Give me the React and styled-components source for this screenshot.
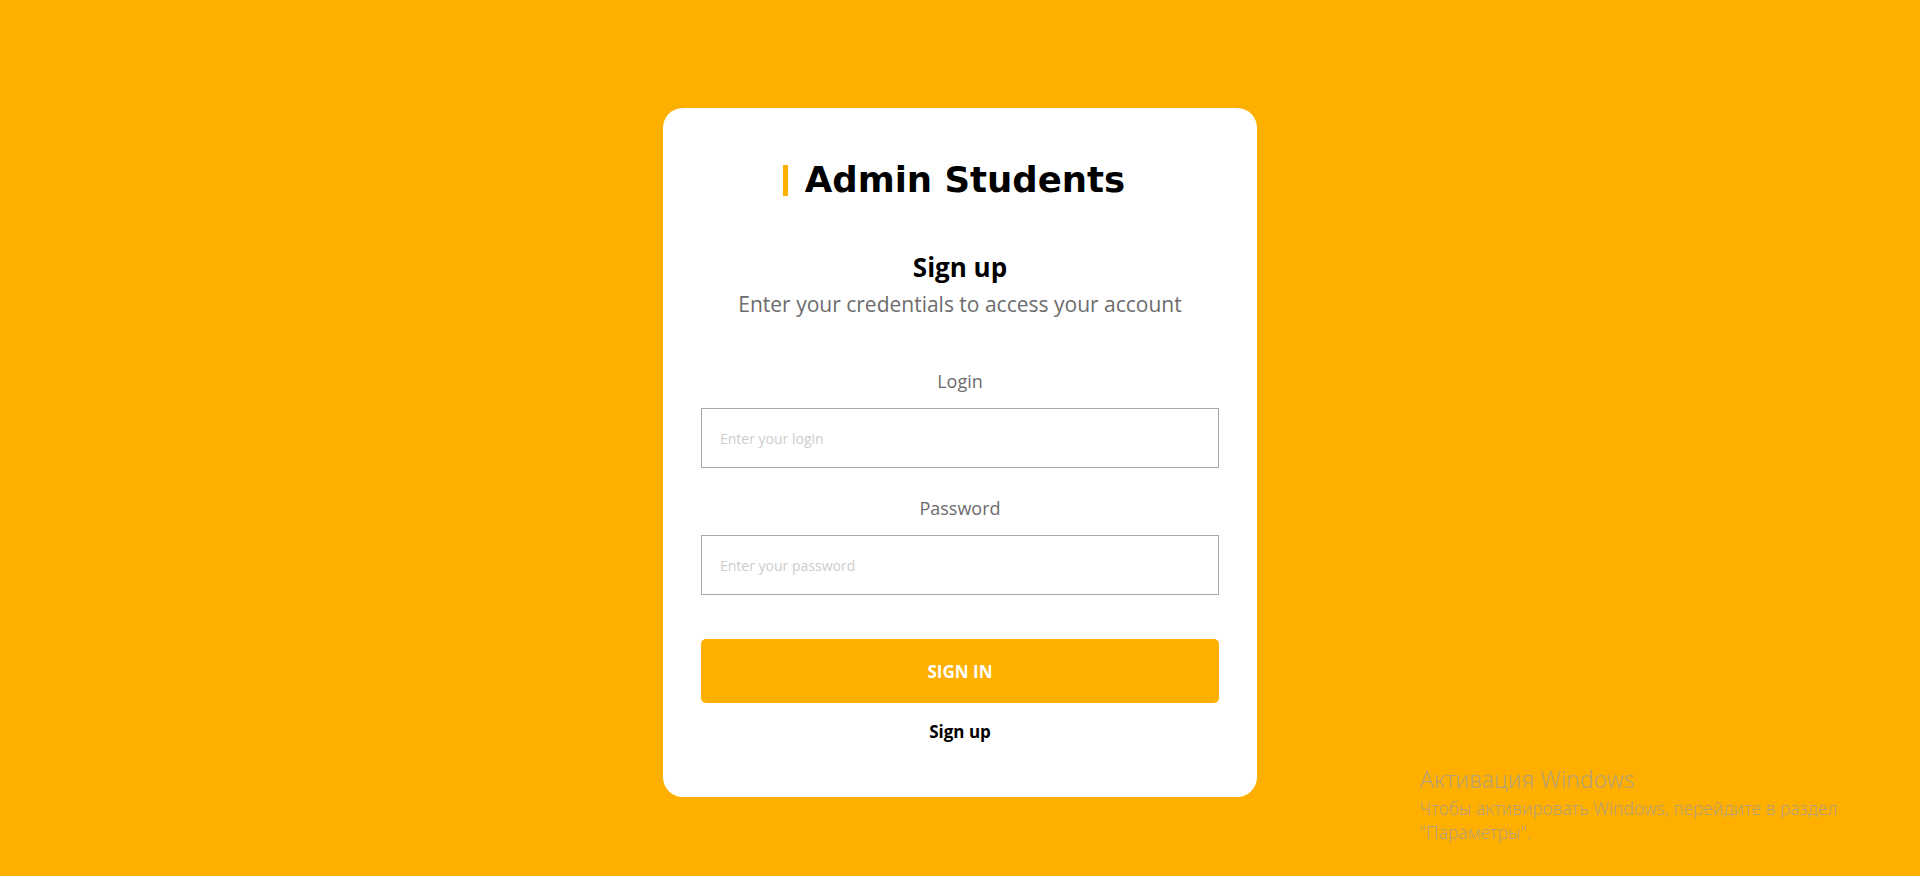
import React from "react";
import styled, { createGlobalStyle } from "styled-components";

const GlobalStyle = createGlobalStyle`
  * {
    box-sizing: border-box;
  }
  body {
    margin: 0;
    background: #feaf00;
    font-family: "Open Sans", "Noto Sans", sans-serif;
  }
`;

const Page = styled.div`
  min-height: 100vh;
  display: flex;
  justify-content: center;
  align-items: flex-start;
  padding-top: 108px;
`;

const Card = styled.div`
  width: 594px;
  background: #fff;
  border-radius: 20px;
  padding: 50px 38px 53px;
  display: flex;
  flex-direction: column;
  align-items: center;
`;

const Brand = styled.div`
  display: flex;
  align-items: center;
  gap: 17px;
  height: 44px;
  padding-right: 12px;
`;

const BrandBar = styled.span`
  width: 5px;
  height: 31px;
  background: #feaf00;
`;

const BrandName = styled.h1`
  margin: 0;
  font-family: "DejaVu Sans", "Open Sans", sans-serif;
  font-weight: 700;
  font-size: 35.5px;
  line-height: 44px;
  color: #000;
`;

const Heading = styled.h2`
  margin: 50px 0 0;
  font-size: 26px;
  line-height: 30px;
  font-weight: 700;
  color: #000;
`;

const Subtitle = styled.p`
  margin: 9px 0 0;
  font-size: 21px;
  line-height: 26px;
  color: #6c6c6c;
`;

const Form = styled.form`
  width: 100%;
  display: flex;
  flex-direction: column;
  align-items: center;
  margin-top: 52px;
`;

const Label = styled.label`
  font-size: 18px;
  line-height: 24px;
  color: #6c6c6c;
  margin-top: ${(p) => (p.$first ? "0" : "28px")};
  margin-bottom: 15px;
`;

const Input = styled.input`
  width: 100%;
  height: 60px;
  border: 1px solid #a9a9a9;
  border-radius: 0;
  padding: 0 18px;
  font-family: "Open Sans", "Noto Sans", sans-serif;
  font-size: 14px;
  outline: none;
  &::placeholder {
    color: #cdcdcd;
  }
`;

const Button = styled.button`
  width: 100%;
  height: 64px;
  margin-top: 44px;
  border: none;
  border-radius: 5px;
  background: #feaf00;
  color: #fff;
  font-family: "Open Sans", "Noto Sans", sans-serif;
  font-weight: 700;
  font-size: 17px;
  text-transform: uppercase;
  cursor: pointer;
`;

const SignUpLink = styled.a`
  margin-top: 17px;
  font-size: 17px;
  line-height: 24px;
  font-weight: 700;
  color: #000;
  text-decoration: none;
  cursor: pointer;
`;

const Watermark = styled.div`
  position: fixed;
  left: 1420px;
  top: 762px;
  color: #b3a075;
  font-family: "Noto Sans", sans-serif;
  pointer-events: none;
  h3 {
    margin: 0;
    font-size: 23px;
    font-weight: 300;
    line-height: 34px;
  }
  p {
    margin: 0;
    font-size: 17.5px;
    font-weight: 300;
    line-height: 24px;
  }
`;

export default function App() {
  return (
    <>
      <GlobalStyle />
      <Page>
        <Card>
          <Brand>
            <BrandBar />
            <BrandName>Admin Students</BrandName>
          </Brand>
          <Heading>Sign up</Heading>
          <Subtitle>Enter your credentials to access your account</Subtitle>
          <Form onSubmit={(e) => e.preventDefault()}>
            <Label $first htmlFor="login">Login</Label>
            <Input id="login" placeholder="Enter your login" />
            <Label htmlFor="password">Password</Label>
            <Input id="password" type="password" placeholder="Enter your password" />
            <Button type="submit">Sign in</Button>
            <SignUpLink>Sign up</SignUpLink>
          </Form>
        </Card>
      </Page>
      <Watermark>
        <h3>Активация Windows</h3>
        <p>Чтобы активировать Windows, перейдите в раздел</p>
        <p>"Параметры".</p>
      </Watermark>
    </>
  );
}
